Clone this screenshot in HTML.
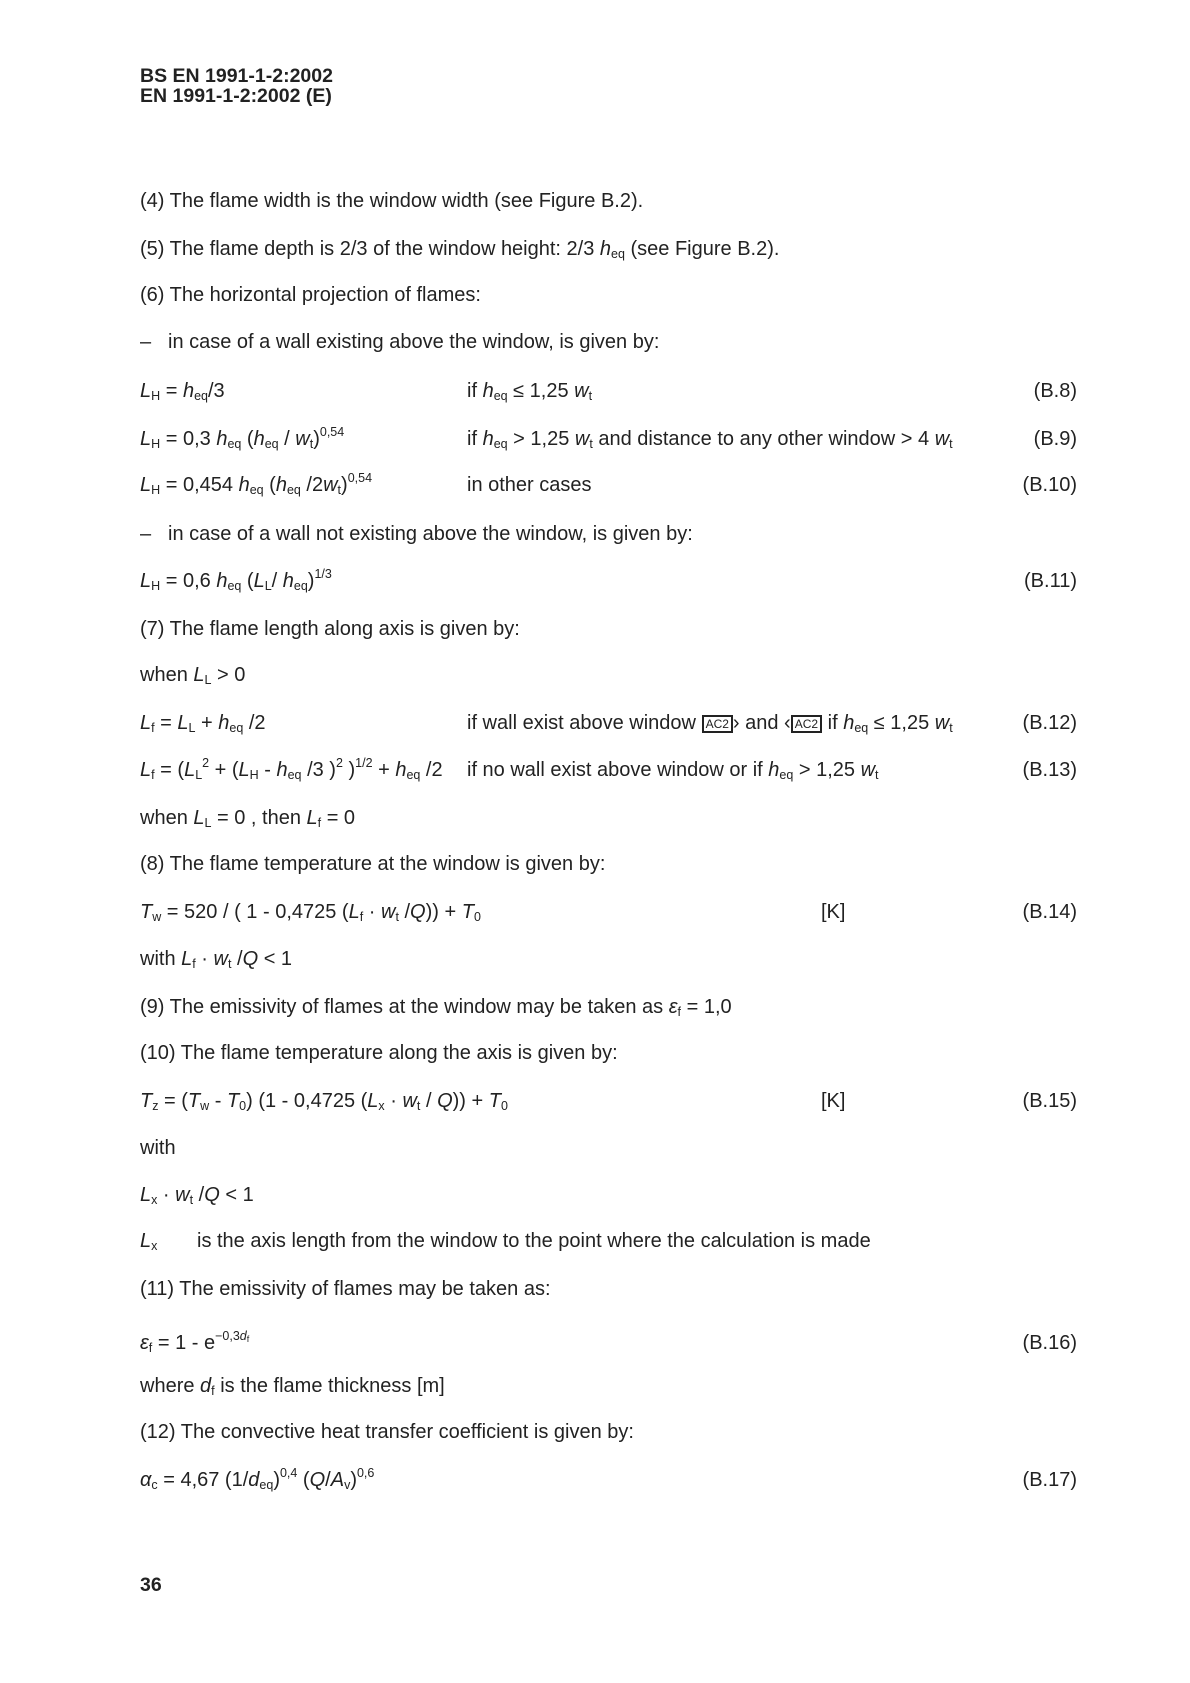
<!DOCTYPE html>
<html><head><meta charset="utf-8"><style>
body{margin:0;background:#fff;}
#p{position:relative;width:1190px;height:1683px;font-family:"Liberation Sans",Arial,sans-serif;font-size:20px;color:#222;}
.l{position:absolute;white-space:nowrap;line-height:24px;}
.h{font-weight:bold;font-size:19.5px;line-height:20px;}
sub{font-size:12.5px;vertical-align:-3px;line-height:0}
sup{font-size:12.5px;vertical-align:9px;line-height:0}
.r{right:113px;}
.m{left:467px}
.box{display:inline-block;border:2px solid #222;font-size:12px;line-height:14px;padding:0 2px;vertical-align:1px}
</style></head><body><div id="p">
<div class="l h" style="left:140px;top:66px">BS EN 1991-1-2:2002</div>
<div class="l h" style="left:140px;top:86px">EN 1991-1-2:2002 (E)</div>

<div class="l" style="left:140px;top:189px">(4) The flame width is the window width (see Figure B.2).</div>
<div class="l" style="left:140px;top:237px">(5) The flame depth is 2/3 of the window height: 2/3 <i>h</i><sub>eq</sub> (see Figure B.2).</div>
<div class="l" style="left:140px;top:283px">(6) The horizontal projection of flames:</div>
<div class="l" style="left:140px;top:330px">–</div><div class="l" style="left:168px;top:330px">in case of a wall existing above the window, is given by:</div>

<div class="l" style="left:140px;top:379px"><i>L</i><sub>H</sub> = <i>h</i><sub>eq</sub>/3</div>
<div class="l m" style="top:379px">if <i>h</i><sub>eq</sub> ≤ 1,25 <i>w</i><sub>t</sub></div>
<div class="l r" style="top:379px">(B.8)</div>

<div class="l" style="left:140px;top:427px"><i>L</i><sub>H</sub> = 0,3 <i>h</i><sub>eq</sub> (<i>h</i><sub>eq</sub> / <i>w</i><sub>t</sub>)<sup>0,54</sup></div>
<div class="l m" style="top:427px">if <i>h</i><sub>eq</sub> &gt; 1,25 <i>w</i><sub>t</sub> and distance to any other window &gt; 4 <i>w</i><sub>t</sub></div>
<div class="l r" style="top:427px">(B.9)</div>

<div class="l" style="left:140px;top:473px"><i>L</i><sub>H</sub> = 0,454 <i>h</i><sub>eq</sub> (<i>h</i><sub>eq</sub> /2<i>w</i><sub>t</sub>)<sup>0,54</sup></div>
<div class="l m" style="top:473px">in other cases</div>
<div class="l r" style="top:473px">(B.10)</div>

<div class="l" style="left:140px;top:522px">–</div><div class="l" style="left:168px;top:522px">in case of a wall not existing above the window, is given by:</div>

<div class="l" style="left:140px;top:569px"><i>L</i><sub>H</sub> = 0,6 <i>h</i><sub>eq</sub> (<i>L</i><sub>L</sub>/ <i>h</i><sub>eq</sub>)<sup>1/3</sup></div>
<div class="l r" style="top:569px">(B.11)</div>

<div class="l" style="left:140px;top:617px">(7) The flame length along axis is given by:</div>
<div class="l" style="left:140px;top:663px">when <i>L</i><sub>L</sub> &gt; 0</div>

<div class="l" style="left:140px;top:711px"><i>L</i><sub>f</sub> = <i>L</i><sub>L</sub> + <i>h</i><sub>eq</sub> /2</div>
<div class="l m" style="top:711px">if wall exist above window <span class="box">AC2</span>› and ‹<span class="box">AC2</span> if <i>h</i><sub>eq</sub> ≤ 1,25 <i>w</i><sub>t</sub></div>
<div class="l r" style="top:711px">(B.12)</div>

<div class="l" style="left:140px;top:758px"><i>L</i><sub>f</sub> = (<i>L</i><sub>L</sub><sup>2</sup> + (<i>L</i><sub>H</sub> - <i>h</i><sub>eq</sub> /3 )<sup>2</sup> )<sup>1/2</sup> + <i>h</i><sub>eq</sub> /2</div>
<div class="l m" style="top:758px">if no wall exist above window or if <i>h</i><sub>eq</sub> &gt; 1,25 <i>w</i><sub>t</sub></div>
<div class="l r" style="top:758px">(B.13)</div>

<div class="l" style="left:140px;top:806px">when <i>L</i><sub>L</sub> = 0 , then <i>L</i><sub>f</sub> = 0</div>
<div class="l" style="left:140px;top:852px">(8) The flame temperature at the window is given by:</div>

<div class="l" style="left:140px;top:900px"><i>T</i><sub>w</sub> = 520 / ( 1 - 0,4725 (<i>L</i><sub>f</sub> · <i>w</i><sub>t</sub> /<i>Q</i>)) + <i>T</i><sub>0</sub></div>
<div class="l" style="left:821px;top:900px">[K]</div>
<div class="l r" style="top:900px">(B.14)</div>

<div class="l" style="left:140px;top:947px">with <i>L</i><sub>f</sub> · <i>w</i><sub>t</sub> /<i>Q</i> &lt; 1</div>
<div class="l" style="left:140px;top:995px">(9) The emissivity of flames at the window may be taken as <i>ε</i><sub>f</sub> = 1,0</div>
<div class="l" style="left:140px;top:1041px">(10) The flame temperature along the axis is given by:</div>

<div class="l" style="left:140px;top:1089px"><i>T</i><sub>z</sub> = (<i>T</i><sub>w</sub> - <i>T</i><sub>0</sub>) (1 - 0,4725 (<i>L</i><sub>x</sub> · <i>w</i><sub>t</sub> / <i>Q</i>)) + <i>T</i><sub>0</sub></div>
<div class="l" style="left:821px;top:1089px">[K]</div>
<div class="l r" style="top:1089px">(B.15)</div>

<div class="l" style="left:140px;top:1136px">with</div>
<div class="l" style="left:140px;top:1183px"><i>L</i><sub>x</sub> · <i>w</i><sub>t</sub> /<i>Q</i> &lt; 1</div>
<div class="l" style="left:140px;top:1229px"><i>L</i><sub>x</sub></div>
<div class="l" style="left:197px;top:1229px">is the axis length from the window to the point where the calculation is made</div>
<div class="l" style="left:140px;top:1277px">(11) The emissivity of flames may be taken as:</div>

<div class="l" style="left:140px;top:1331px"><i>ε</i><sub>f</sub> = 1 -  e<sup>−0,3<i>d</i><sub style="font-size:9px;vertical-align:-2px">f</sub></sup></div>
<div class="l r" style="top:1331px">(B.16)</div>

<div class="l" style="left:140px;top:1374px">where <i>d</i><sub>f</sub> is the flame thickness [m]</div>
<div class="l" style="left:140px;top:1420px">(12) The convective heat transfer coefficient is given by:</div>

<div class="l" style="left:140px;top:1468px"><i>α</i><sub>c</sub> = 4,67 (1/<i>d</i><sub>eq</sub>)<sup>0,4</sup> (<i>Q</i>/<i>A</i><sub>v</sub>)<sup>0,6</sup></div>
<div class="l r" style="top:1468px">(B.17)</div>

<div class="l h" style="left:140px;top:1575px">36</div>
</div></body></html>
